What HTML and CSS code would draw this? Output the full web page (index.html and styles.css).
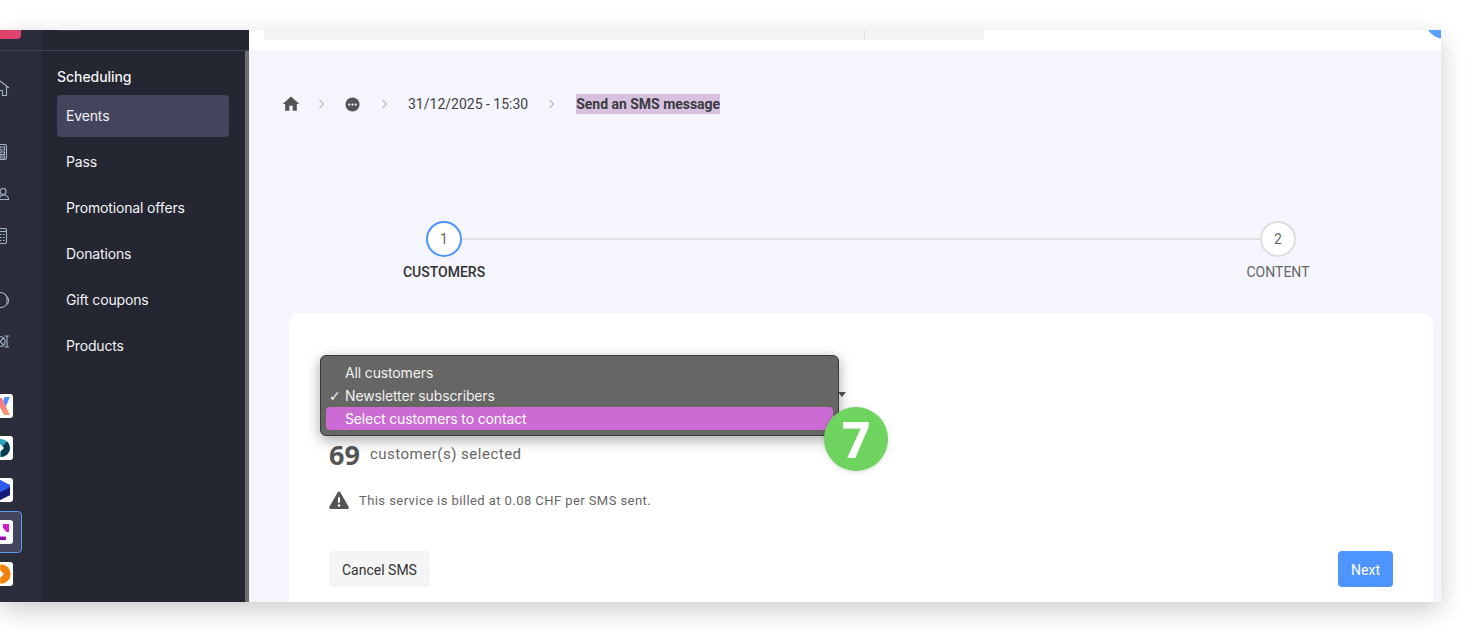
FILE: index.html
```html
<!DOCTYPE html>
<html lang="en">
<head>
<meta charset="utf-8">
<title>Send an SMS message</title>
<link rel="stylesheet" href="styles.css">
</head>
<body>
<div class="window">
  <nav class="rail">
    <div class="rail-top"><div class="rail-pill"></div></div>
    <div class="rail-icons">
      <svg class="line-icon i-home" viewBox="0 0 18 16"><path d="M0 8 9 1 18 8M2.500 6.500V15.500H6.500V10.500H11.500V15.500H15.500V6.500"/></svg>
      <svg class="line-icon i-calc" viewBox="0 0 16 16"><rect x=".5" y=".5" width="15" height="15" rx="2"/><path d="M9 3h4.500v3H9zM9 8h4.500v2.500H9zM9 12h4.500v2H9z"/></svg>
      <svg class="line-icon i-users" viewBox="0 0 18 12"><circle cx="12" cy="3.500" r="3"/><path d="M8.500 11.500c0-2.500 1.500-4.500 4-4.500s5 1.500 5 4.500ZM5 .5a3 3 0 0 1 3 3 3 3 0 0 1-3 3M1 11.500c0-2.500 2-4.500 4-4.500"/></svg>
      <svg class="line-icon i-build" viewBox="0 0 16 16"><rect x=".5" y=".5" width="15" height="15" rx="1.500"/><path d="M.5 3.500H15.500M9 6.500h1.500M12 6.500h1.500M9 9.500h1.500M12 9.500h1.500M9 12.500h1.500M12 12.500h1.500"/></svg>
      <svg class="line-icon i-head" viewBox="0 0 18 16"><path d="M9 .5a8 8 0 0 1 7 4.500v7a8 8 0 0 1-7 3.500"/><path d="M16 5a4 4 0 0 1 1.500 3.500A4 4 0 0 1 16 12"/></svg>
      <svg class="line-icon i-bot" viewBox="0 0 18 13"><circle cx="9" cy="6.500" r="5"/><path d="M13.500 1H18M13.500 12H18M16 1V12M5 2.500l8 8M13 2.500l-8 8"/></svg>
      <div class="tile t1"><svg viewBox="0 0 24 24"><defs><linearGradient id="gx" x1="0" y1="0" x2="1" y2="1"><stop offset="0" stop-color="#f06a9c"/><stop offset="1" stop-color="#ff9f68"/></linearGradient></defs><path d="M13 12 15.500 3H21L16.500 13Z" fill="#4d8fff"/><path d="M6 4 13 4 21 21H15Z" fill="url(#gx)"/></svg></div>
      <div class="tile t2"><svg viewBox="0 0 24 24"><circle cx="12" cy="12" r="9" fill="#2aa5bd"/><path d="M12 21a9 9 0 0 0 9-9 9 9 0 0 0-3-6.500L12 12Z" fill="#0e3c4d"/><path d="M6 8h5l4 4-4 4H6l3-4Z" fill="#fff"/></svg></div>
      <div class="tile t3"><svg viewBox="0 0 24 24"><path d="M11 2 21 7V17L11 22 3 17V7Z" fill="#2643d8"/><path d="M11 12 21 7V17L11 22 3 17Z" fill="#141a78"/><path d="M3 10 12 14 21 9V7.500L11 2 3 7Z" fill="#2f5cf0"/></svg></div>
      <div class="tile-box">
        <div class="tile t4"><svg viewBox="0 0 24 24"><defs><linearGradient id="gs" x1="0" y1="1" x2="1" y2="0"><stop offset="0" stop-color="#4a0aa8"/><stop offset="1" stop-color="#e016cc"/></linearGradient></defs><path d="M14 4H20V12H17.500V8L14 8Z" fill="#d41bd0"/><path d="M14 4V8L17.500 12H20V8Z" fill="#d41bd0"/><path d="M4 20V18L11 13V16.500H17V20Z" fill="url(#gs)"/></svg></div>
      </div>
      <div class="tile t5"><svg viewBox="0 0 24 24"><circle cx="12" cy="12" r="9.500" fill="#fb9d1a"/><path d="M12 2.500a9.500 9.500 0 0 1 0 19Z" fill="#f2820c"/><path d="M3 8h8l4 4-4 4H3Z" fill="#fff"/></svg></div>
    </div>
  </nav>
  <aside class="panel">
    <div class="panel-top"><div class="panel-stub"></div></div>
    <div class="panel-body">
      <h2 class="menu-title">Scheduling</h2>
      <ul class="menu">
        <li class="menu-item active">Events</li>
        <li class="menu-item">Pass</li>
        <li class="menu-item">Promotional offers</li>
        <li class="menu-item">Donations</li>
        <li class="menu-item">Gift coupons</li>
        <li class="menu-item">Products</li>
      </ul>
    </div>
  </aside>
  <main class="main">
    <header class="topbar">
      <div class="search"><div class="search-field"></div><div class="search-side"></div></div>
      <div class="avatar"></div>
    </header>
    <div class="crumbs">
      <svg class="crumb-home" viewBox="0 0 24 24"><path d="M10 20v-6h4v6h5v-8h3L12 3 2 12h3v8z"/></svg>
      <svg class="chev" viewBox="0 0 8 12"><path d="M1.500 2 5.500 6 1.500 10"/></svg>
      <svg class="crumb-more" viewBox="0 0 16 16"><circle cx="8" cy="8" r="7.500"/><circle class="dot" cx="4.500" cy="8" r="1.200"/><circle class="dot" cx="8" cy="8" r="1.200"/><circle class="dot" cx="11.500" cy="8" r="1.200"/></svg>
      <svg class="chev" viewBox="0 0 8 12"><path d="M1.500 2 5.500 6 1.500 10"/></svg>
      <span class="crumb-date">31/12/2025 - 15:30</span>
      <svg class="chev" viewBox="0 0 8 12"><path d="M1.500 2 5.500 6 1.500 10"/></svg>
      <strong class="crumb-current">Send an SMS message</strong>
    </div>
    <div class="stepper">
      <div class="step active"><span class="step-num">1</span><span class="step-label">CUSTOMERS</span></div>
      <div class="step-line"></div>
      <div class="step"><span class="step-num">2</span><span class="step-label">CONTENT</span></div>
    </div>
    <section class="card">
      <div class="select"><span class="caret"></span>
        <div class="dropdown">
          <div class="opt">All customers</div>
          <div class="opt checked">Newsletter subscribers</div>
          <div class="opt hover">Select customers to contact</div>
        </div>
        <div class="badge">7</div>
      </div>
      <p class="count"><b>69</b><span>customer(s) selected</span></p>
      <p class="notice">
        <svg viewBox="0 0 20 18"><path d="M10 .5a1.500 1.500 0 0 1 1.300.8l8.300 14.400a1.500 1.500 0 0 1-1.300 2.300H1.700a1.500 1.500 0 0 1-1.300-2.300L8.700 1.300A1.500 1.500 0 0 1 10 .5Z"/><rect x="9" y="6" width="2" height="6" rx="1"/><circle cx="10" cy="14.500" r="1.200"/></svg>
        <span>This service is billed at 0.08 CHF per SMS sent.</span>
      </p>
      <div class="actions">
        <button class="btn">Cancel SMS</button>
        <button class="btn primary">Next</button>
      </div>
    </section>
  </main>
</div>
</body>
</html>
```
FILE: styles.css
```css
* { box-sizing: border-box; }
html, body { margin: 0; height: 632px; overflow: hidden; background: #fff; }
body { padding-top: 30px; font-family: Roboto, sans-serif; }

.window {
  width: 1441px;
  height: 572px;
  display: flex;
  overflow: hidden;
  background: #f4f5fd;
  box-shadow: 0 8px 24px rgba(0, 0, 0, .2);
}

/* rail */
.rail { width: 41px; flex: none; background: #2b2e3a; overflow: hidden; }
.rail-top { height: 21px; border-bottom: 1px solid #3f4154; }
.rail-pill { width: 21px; height: 9px; background: #e0436c; border-radius: 0 0 4px 0; }
.rail-icons { display: flex; flex-direction: column; align-items: flex-start; margin-left: -11px; }
.line-icon { display: block; fill: none; stroke: #a3b2c2; stroke-width: 1.100; flex: none; margin-left: 2px; }
.i-home { width: 18px; height: 16px; margin-top: 29px; }
.i-calc { width: 16px; height: 16px; margin-top: 48px; }
.i-users { width: 18px; height: 12px; margin-top: 28px; }
.i-build { width: 16px; height: 16px; margin-top: 28px; }
.i-head { width: 18px; height: 16px; margin-top: 48px; }
.i-bot { width: 18px; height: 13px; margin-top: 27px; }
.tile { width: 24px; height: 24px; background: #fff; border-radius: 3px; flex: none; }
.tile svg { display: block; width: 24px; height: 24px; }
.t1 { margin-top: 46px; }
.t2, .t3 { margin-top: 18px; }
.tile-box {
  width: 33px; height: 42px; margin-top: 9px; padding: 9px 0 0;
  background: #43455c; border: 1px solid #5c9bea; border-radius: 4px; flex: none;
}
.tile-box .tile { margin: -1px 0 0 -1px; }
.t5 { margin-top: 9px; }

/* panel */
.panel { width: 208px; flex: none; background: #242632; display: flex; flex-direction: column; }
.panel-top { height: 21px; border-bottom: 1px solid #3f4154; padding-left: 17px; }
.panel-stub { width: 22px; height: 1px; background: #3a3c4c; }
.panel-body { flex: 1; padding: 0 0 0 16px; border-right: 4px solid #6d6d72; }
.menu-title { margin: 16px 0 0; font: 500 14px/20px Inter, sans-serif; letter-spacing: -.05px; color: #f2f2f4; }
.menu { list-style: none; margin: 8px 0 0; padding: 0; }
.menu-item {
  width: 172px; height: 42px; padding-left: 9px; margin-bottom: 4px;
  border-radius: 4px; display: flex; align-items: center;
  font: 400 14px/20px Inter, sans-serif; letter-spacing: -.15px; color: #f2f2f4;
}
.menu-item.active { background: #43455c; }

/* main */
.main { flex: 1; min-width: 0; display: flex; flex-direction: column; }
.topbar { position: relative; height: 20px; background: #fff; padding-left: 15px; overflow: hidden; flex: none; }
.search { display: flex; width: 720px; height: 10px; }
.search-field { width: 601px; background: #f5f5f5; border-right: 1px solid #e4e4e4; }
.search-side { flex: 1; background: #f5f5f5; border-radius: 0 0 4px 0; }
.avatar { position: absolute; right: -24px; top: -31px; width: 40px; height: 40px; border-radius: 50%; background: #5aa0ff; }

.crumbs { display: flex; align-items: center; height: 20px; margin: 44px 0 0 32px; font-size: 14px; color: #3f3f45; flex: none; }
.crumb-home { width: 20px; height: 20px; fill: #555; }
.chev { width: 8px; height: 12px; fill: none; stroke: #999; stroke-width: 1; margin-bottom: 1px; }
.crumbs .crumb-home + .chev { margin-left: 17px; }
.crumb-more { width: 15px; height: 15px; margin-left: 19px; fill: #555; }
.crumb-more .dot { fill: #f4f5fd; }
.crumb-more + .chev { margin-left: 21px; }
.crumb-date { margin-left: 19px; }
.crumb-date + .chev { margin-left: 20px; }
.crumb-current { margin-left: 20px; font-weight: 700; background: #d8c1de; color: #3a3a42; line-height: 20px; letter-spacing: -.02px; }

.stepper { display: flex; align-items: flex-start; margin: 107px 0 0 154px; width: 916px; height: 92px; flex: none; }
.step { width: 82px; display: flex; flex-direction: column; align-items: center; flex: none; }
.step-num {
  width: 36px; height: 36px; border-radius: 50%; border: 2px solid #dedede; background: #fff;
  display: flex; align-items: center; justify-content: center; font-size: 14px; color: #666;
}
.step.active .step-num { border-color: #4d94ff; }
.step-label { margin-top: 5px; font-size: 14px; line-height: 20px; color: #666; white-space: nowrap; }
.step.active .step-label { color: #333; font-weight: 500; }
.step-line { flex: 1; height: 2px; background: #e0e0e0; margin: 17px -23px 0; }

.card { margin: 0 8px 0 40px; height: 320px; padding: 0 40px; background: #fff; border-radius: 10px; flex: none; }
.select { position: relative; height: 88px; }
.caret {
  position: absolute; left: 509px; top: 79px;
  border: 4px solid transparent; border-top: 5px solid #555; border-bottom: 0;
}
.dropdown {
  position: absolute; left: -9px; top: 42px; width: 519px; height: 81px; padding: 5px 5px;
  background: #666664; border: 1px solid #3a3a3a; border-radius: 6px;
  box-shadow: 0 4px 14px rgba(0, 0, 0, .35);
  font: 400 14px/24px Inter, sans-serif; letter-spacing: -.14px; color: #f0f0f0;
}
.opt { position: relative; height: 23px; padding-left: 19px; white-space: nowrap; }
.opt.checked::before { content: "✓"; position: absolute; left: 3px; top: 0; font: 700 14px/24px "DejaVu Sans", sans-serif; }
.opt.hover { background: #cb6bd3; border-radius: 4px; color: #fff; }
.badge {
  position: absolute; left: 495px; top: 94px; width: 64px; height: 64px; border-radius: 50%;
  background: #6fd360; color: #fff; display: flex; align-items: center; justify-content: center;
  font: 700 50px/1 "Open Sans", sans-serif; box-shadow: 0 1px 4px rgba(0, 0, 0, .15);
}
.count { display: flex; align-items: center; gap: 10px; margin: 41px 0 0; height: 26px; color: #555; }
.count b { font: 700 27px/26px "Noto Sans", sans-serif; }
.count span { font-size: 15px; letter-spacing: .5px; color: #666; margin-top: -3px; }
.notice { display: flex; align-items: center; gap: 10px; margin: 22px 0 0; height: 20px; color: #666; font-size: 13px; letter-spacing: .43px; }
.notice svg { width: 20px; height: 18px; fill: #555; flex: none; }
.notice rect, .notice circle { fill: #fff; }
.actions { display: flex; justify-content: space-between; margin-top: 41px; }
.btn { height: 36px; padding: 2px 13px 0; border: 0; border-radius: 4px; background: #f5f5f5; font: 400 14px Roboto, sans-serif; color: #333; }
.btn.primary { width: 55px; padding: 2px 0 0; background: #4d94ff; color: #fff; }
```
